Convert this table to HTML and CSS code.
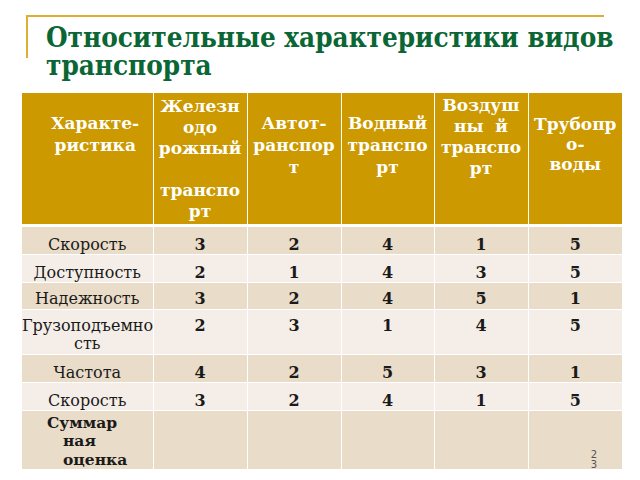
FILE: index.html
```html
<!DOCTYPE html>
<html lang="ru">
<head>
<meta charset="utf-8">
<title>Относительные характеристики видов транспорта</title>
<link rel="stylesheet" href="styles.css">
</head>
<body>
<div class="slide">
  <div class="frame">
    <h1 class="title">Относительные характеристики видов транспорта</h1>
  </div>
  <table class="grid">
    <colgroup>
      <col class="c-first"><col class="c-num"><col class="c-num"><col class="c-num3"><col class="c-num"><col class="c-num">
    </colgroup>
    <thead>
      <tr class="head">
        <th class="h h1">Характе-<br>ристика</th>
        <th class="h h2">Железн<br>одо<br>рожный<br>&nbsp;<br>транспо<br>рт</th>
        <th class="h h3">Автот-<br>ранспор<br>т</th>
        <th class="h h3">Водный<br>транспо<br>рт</th>
        <th class="h h5">Воздуш<br>ны&nbsp; й<br>транспо<br>рт</th>
        <th class="h h6">Трубопр<br>о-<br>воды</th>
      </tr>
    </thead>
    <tbody>
      <tr class="r dark r1"><td class="name">Скорость</td><td>3</td><td>2</td><td>4</td><td>1</td><td>5</td></tr>
      <tr class="r light r2"><td class="name">Доступность</td><td>2</td><td>1</td><td>4</td><td>3</td><td>5</td></tr>
      <tr class="r dark r3"><td class="name">Надежность</td><td>3</td><td>2</td><td>4</td><td>5</td><td>1</td></tr>
      <tr class="r light r4"><td class="name">Грузоподъемно<br>сть</td><td>2</td><td>3</td><td>1</td><td>4</td><td>5</td></tr>
      <tr class="r dark r5"><td class="name">Частота</td><td>4</td><td>2</td><td>5</td><td>3</td><td>1</td></tr>
      <tr class="r light r6"><td class="name">Скорость</td><td>3</td><td>2</td><td>4</td><td>1</td><td>5</td></tr>
      <tr class="r dark r7"><td class="total">Суммар<br>ная<br>оценка</td><td></td><td></td><td></td><td></td><td class="last"><div class="pagenum">2<br>3</div></td></tr>
    </tbody>
  </table>
</div>
</body>
</html>
```

FILE: styles.css
```css
html, body {
  margin: 0;
  padding: 0;
  background: #ffffff;
}

.slide {
  width: 640px;
  height: 480px;
  padding: 15px 0 0 0;
  box-sizing: border-box;
  overflow: hidden;
}

.frame {
  margin-left: 26px;
  width: 576px;
  height: 41px;
  border-top: 2px solid #dfb030;
  border-left: 2px solid #dfb030;
}

.title {
  margin: 0;
  padding: 7px 0 0 18px;
  font-family: "DejaVu Serif Condensed", "DejaVu Serif", serif;
  font-stretch: condensed;
  font-weight: bold;
  font-size: 27.6px;
  line-height: 28px;
  color: #0a6634;
  width: 590px;
}

.grid {
  margin: 35px 0 0 22px;
  width: 600px;
  table-layout: fixed;
  border-collapse: collapse;
  font-family: "DejaVu Serif", serif;
}

.c-first { width: 131px; }
.c-num { width: 94px; }
.c-num3 { width: 93px; }

.grid th, .grid td {
  border: 1px solid #ffffff;
  padding: 0;
  vertical-align: top;
  text-align: center;
}

.grid tr:first-child th { border-top: none; }
.grid th:first-child, .grid td:first-child { border-left: none; }
.grid th:last-child, .grid td:last-child { border-right: none; }
.grid tbody tr:last-child td { border-bottom: none; }

.head { height: 132px; }

.h {
  background: #cc9900;
  color: #ffffff;
  font-weight: bold;
  font-size: 17px;
  line-height: 22px;
  border-bottom: 3px solid #ffffff !important;
}

.h1 { padding: 19px 0 0 16px !important; }
.h2 { padding-top: 3px !important; line-height: 21px; }
.h3 { padding-top: 19px !important; }
.h5 { padding-top: 2px !important; line-height: 21px; }
.h6 { padding-top: 21px !important; line-height: 20px; }

.dark td { background: #e9dcc8; }
.light td { background: #f5eee8; }

.r td {
  font-size: 16px;
  line-height: 18px;
  font-weight: bold;
  color: #1a1a1a;
  padding-top: 9px;
}

.r td.name {
  font-weight: normal;
  font-size: 16px;
}

.r1 { height: 26px; }
.r2 { height: 27px; }
.r3 { height: 27px; }
.r4 { height: 45px; }
.r5 { height: 27px; }
.r6 { height: 28px; }
.r7 { height: 59px; }

.r3 td { padding-top: 7px; }
.r4 td { padding-top: 7px; }

.r td.total {
  text-align: left;
  padding: 3px 0 0 41px;
  text-indent: -16px;
  font-size: 15.5px;
  line-height: 18.5px;
}

.r td.last {
  vertical-align: bottom;
  text-align: right;
  padding: 0;
}

.pagenum {
  font-family: "DejaVu Sans", sans-serif;
  font-weight: normal;
  font-size: 10px;
  line-height: 10px;
  color: #555555;
  padding: 0 25px 0 0;
  margin-bottom: -1px;
}
```
